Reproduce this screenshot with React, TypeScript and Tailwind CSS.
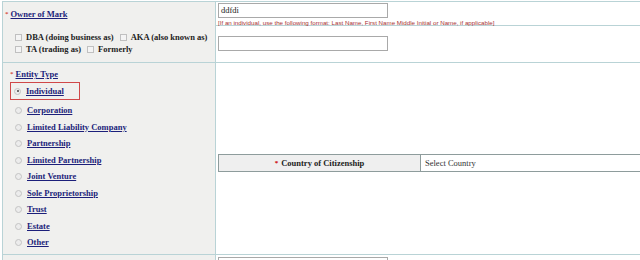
import React from "react";

const LINK = "text-[#1c1f7a] underline font-bold";

function Radio({ checked }: { checked?: boolean }) {
  return (
    <span className="relative inline-block w-[7px] h-[7px] rounded-full border border-[#c4c4c4] bg-[#ececec] shrink-0">
      {checked && <span className="absolute left-[1.5px] top-[1.5px] w-[2px] h-[2px] rounded-full bg-[#444]" />}
    </span>
  );
}

function Check() {
  return <span className="inline-block w-[7px] h-[7px] border border-[#c0c0c0] bg-[#f4f4f4] shrink-0" />;
}

const entities = [
  "Corporation",
  "Limited Liability Company",
  "Partnership",
  "Limited Partnership",
  "Joint Venture",
  "Sole Proprietorship",
  "Trust",
  "Estate",
  "Other",
];

export default function App() {
  return (
    <div className="w-[640px] h-[260px] overflow-hidden bg-white font-['Liberation_Serif',serif] text-[8.5px] leading-none">
      <div className="ml-[2px] mt-[1px] border-t border-l border-[#b9d3d6]">
        {/* Row 1 */}
        <div className="grid grid-cols-[213px_1fr] h-[24px] border-b border-[#b9d3d6]">
          <div className="bg-[#f0f0ee] border-r border-[#b9d3d6] flex items-center pl-[2px]">
            <span className="text-[#cc0000] text-[7px] mr-[2px]">*</span>
            <span className={LINK}>Owner of Mark</span>
          </div>
          <div className="pl-[2px] pt-[1px] flex flex-col">
            <div className="w-[170px] h-[15px] border border-[#a9a9a9] text-[8.5px] pl-[2px] flex items-center text-[#222]">ddfdi</div>
            <div className="text-[6.2px] mt-[2px] text-[#a83232] font-['Liberation_Sans',sans-serif] whitespace-nowrap">
              [If an individual, use the following format: Last Name, First Name Middle Initial or Name, if applicable]
            </div>
          </div>
        </div>
        {/* Row 2 */}
        <div className="grid grid-cols-[213px_1fr] h-[37px] border-b border-[#b9d3d6]">
          <div className="bg-[#f0f0ee] border-r border-[#b9d3d6] pl-[12px] pt-[7px] font-bold text-[#222] flex flex-col gap-[3px]">
            <div className="flex items-center gap-[4px] h-[9px]">
              <Check />
              <span className="mr-[2px]">DBA (doing business as)</span>
              <Check />
              <span>AKA (also known as)</span>
            </div>
            <div className="flex items-center gap-[4px] h-[9px]">
              <Check />
              <span className="mr-[2px]">TA (trading as)</span>
              <Check />
              <span>Formerly</span>
            </div>
          </div>
          <div className="pl-[2px] pt-[10px]">
            <div className="w-[170px] h-[15px] border border-[#a9a9a9]" />
          </div>
        </div>
        {/* Row 3 */}
        <div className="grid grid-cols-[213px_1fr] h-[192px] border-b border-[#b9d3d6]">
          <div className="bg-[#f0f0ee] border-r border-[#b9d3d6] pl-[7px] pt-[7px]">
            <div className="flex items-center h-[9px]">
              <span className="text-[#cc0000] text-[7px] mr-[2px]">*</span>
              <span className={LINK}>Entity Type</span>
            </div>
            <div className="mt-[3px] w-[70px] h-[18px] border-[1.5px] border-[#d04848] flex items-center pl-[3px] gap-[5px]">
              <Radio checked />
              <span className={LINK}>Individual</span>
            </div>
            <div className="flex flex-col gap-[7.5px] mt-[6px] pl-[5px]">
              {entities.map((e) => (
                <div key={e} className="flex items-center gap-[5px] h-[9px]">
                  <Radio />
                  <span className={LINK}>{e}</span>
                </div>
              ))}
            </div>
          </div>
          <div className="pl-[2px] pt-[91px] overflow-hidden">
            <div className="w-[440px] grid grid-cols-[202px_1fr] h-[18px] border border-[#8e9c9c]">
              <div className="bg-[#efefef] border-r border-[#8e9c9c] flex items-center justify-center font-bold text-[#222]">
                <span className="text-[#cc0000] text-[7px] mr-[3px]">*</span>
                Country of Citizenship
              </div>
              <div className="flex items-center pl-[4px] text-[#333]">Select Country</div>
            </div>
          </div>
        </div>
        {/* Row 4 */}
        <div className="grid grid-cols-[213px_1fr] h-[10px]">
          <div className="bg-[#f0f0ee] border-r border-[#b9d3d6]" />
          <div className="pl-[2px] pt-[2px]">
            <div className="w-[170px] h-[15px] border border-[#a9a9a9]" />
          </div>
        </div>
      </div>
    </div>
  );
}
